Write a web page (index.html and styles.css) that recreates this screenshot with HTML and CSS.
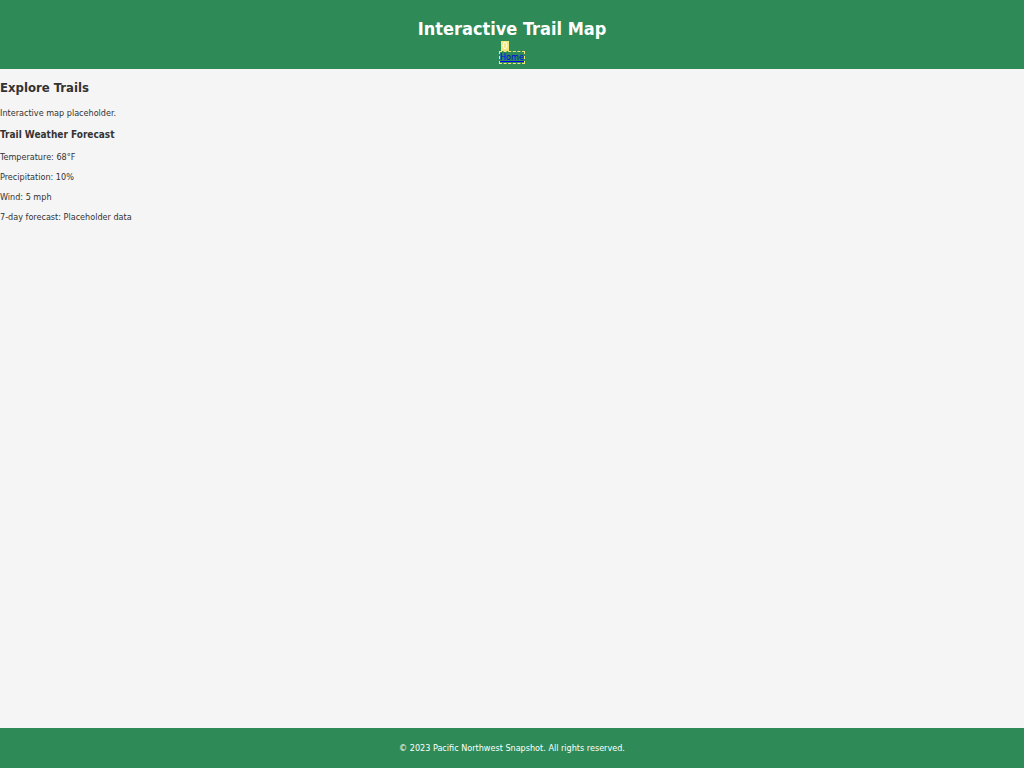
FILE: index.html
```html
<!DOCTYPE html>
<html lang="en">
<head>
<meta charset="utf-8">
<title>Interactive Trail Map</title>
<link rel="stylesheet" href="styles.css">
</head>
<body>
<header class="site-header">
  <h1 class="site-title">Interactive Trail Map</h1>
  <nav class="site-nav">
    <span class="nav-badge">0</span>
    <a class="nav-link" href="#">Home</a>
  </nav>
</header>
<main class="content">
  <h2 class="section-title">Explore Trails</h2>
  <p class="text">Interactive map placeholder.</p>
  <h3 class="sub-title">Trail Weather Forecast</h3>
  <p class="text">Temperature: 68°F</p>
  <p class="text">Precipitation: 10%</p>
  <p class="text">Wind: 5 mph</p>
  <p class="text">7-day forecast: Placeholder data</p>
</main>
<footer class="site-footer">
  <p class="copyright">© 2023 Pacific Northwest Snapshot. All rights reserved.</p>
</footer>
</body>
</html>
```
FILE: styles.css
```css
body {
  margin: 0;
  min-height: 100vh;
  display: flex;
  flex-direction: column;
  background: #f5f5f5;
  color: #333;
  font-family: "DejaVu Sans Condensed", "DejaVu Sans", sans-serif;
  font-size: 9px;
  line-height: 12px;
}
.site-header {
  background: #2e8b57;
  color: #fff;
  text-align: center;
  padding: 16px 0 5px;
}
.site-title {
  margin: 0;
  font-size: 18px;
  line-height: 25px;
}
.site-nav {
  display: grid;
  justify-content: center;
  justify-items: start;
}
.nav-badge {
  margin-left: 2px;
  width: 8px;
  line-height: 10px;
  background: #f0e87c;
}
.nav-link {
  border: 1px dashed #f0e87c;
  line-height: 11px;
  color: #0000ee;
}
.content {
  flex: 1;
}
.section-title {
  margin: 11px 0;
  font-size: 13px;
  line-height: 16px;
}
.sub-title {
  margin: 9px 0;
  font-size: 10px;
  line-height: 14px;
}
.text {
  margin: 8px 0;
}
.site-footer {
  background: #2e8b57;
  color: #fff;
  text-align: center;
  padding: 14px 0;
}
.copyright {
  margin: 0;
}
```
